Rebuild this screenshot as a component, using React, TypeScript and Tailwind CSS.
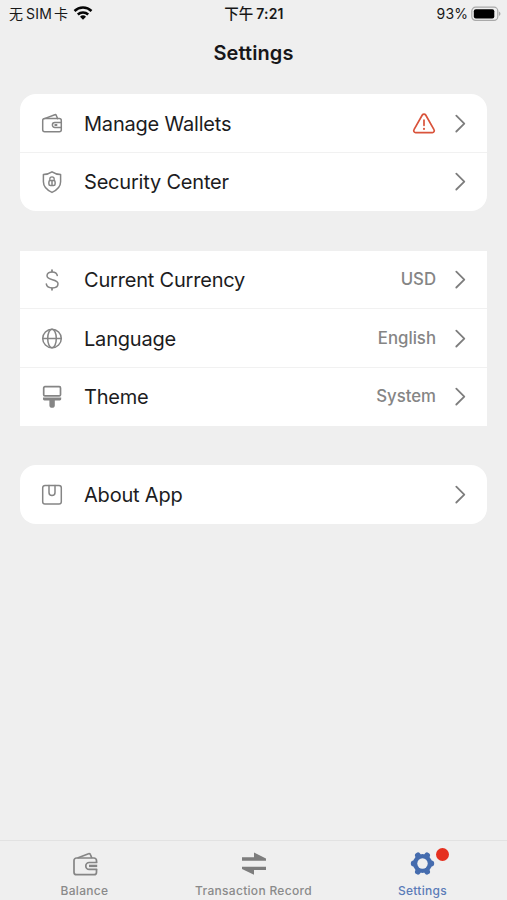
import type { ReactNode } from 'react';

type Row = {
  label: string;
  icon: ReactNode;
  value?: string;
  warning?: boolean;
  height: string;
};

const iconProps = {
  width: 24,
  height: 24,
  viewBox: '0 0 24 24',
  fill: 'none',
  stroke: '#858585',
  strokeWidth: 1.5,
  strokeLinecap: 'round' as const,
  strokeLinejoin: 'round' as const,
};

const WalletIcon = () => (
  <svg {...iconProps}>
    <rect x="2.7" y="6.6" width="18.6" height="13.2" rx="2" />
    <path d="M4.5 6.6 14.8 2.7a1.2 1.2 0 0 1 1.5.7L17.6 6.6" />
    <path d="M21.3 10.6h-6.5a2.4 2.4 0 0 0 0 4.8h6.5" />
    <path d="M15.2 13h1.4" strokeWidth="1.8" />
  </svg>
);

const ShieldIcon = () => (
  <svg {...iconProps}>
    <path d="M12 1.8c2.5 1.7 5.4 2.6 8.6 2.8v7.2c0 5-3.6 8.3-8.6 10.6-5-2.3-8.6-5.6-8.6-10.6V4.6C6.6 4.4 9.5 3.5 12 1.8Z" />
    <path d="M9.8 10.3V9a2.2 2.2 0 0 1 4.4 0v1.3" strokeWidth="1.3" />
    <rect x="8.9" y="10.5" width="6.2" height="5" rx="1.5" />
    <path d="M12 11v3.5" />
  </svg>
);

const DollarIcon = () => (
  <svg {...iconProps}>
    <path d="M17.3 7.5c-.4-2.3-2.5-3.6-5.2-3.6-2.9 0-5.1 1.5-5.1 3.8 0 5.4 11 2.5 11 8.1 0 2.5-2.3 4.1-5.6 4.1-3.4 0-5.8-1.5-6.1-4" />
    <path d="M12 2.1v1.5M12 20.3v1.5" strokeWidth="1.8" />
  </svg>
);

const GlobeIcon = () => (
  <svg {...iconProps}>
    <circle cx="12" cy="11.5" r="9.3" />
    <ellipse cx="12" cy="11.5" rx="4.3" ry="9.3" />
    <path d="M2.7 11.5h18.6" />
  </svg>
);

const BrushIcon = () => (
  <svg {...iconProps}>
    <rect x="3.7" y="1.7" width="16.8" height="9.2" rx="1.2" strokeWidth="1.7" />
    <path
      d="M3 12.6h18.2v1.5c0 .8-.6 1.4-1.4 1.4h-5v4.9c0 1.4-1.1 2.3-2.7 2.3s-2.7-.9-2.7-2.3v-4.9h-5c-.8 0-1.4-.6-1.4-1.4Z"
      fill="#858585"
      stroke="none"
    />
  </svg>
);

const AboutIcon = () => (
  <svg {...iconProps}>
    <rect x="2.7" y="2.4" width="18.6" height="18.6" rx="2.3" />
    <path d="M9 2.6v6.8a3 3 0 0 0 6 0V2.6" />
  </svg>
);

const WarningIcon = () => (
  <svg width="24" height="24" viewBox="0 0 24 24" fill="none" stroke="#d9533b" strokeWidth="1.7" strokeLinecap="round" strokeLinejoin="round">
    <path d="M10.3 3a2 2 0 0 1 3.4 0l8.3 14.7a1.9 1.9 0 0 1-1.7 2.9H3.7A1.9 1.9 0 0 1 2 17.7Z" />
    <path d="M12 8.1v5.2" />
    <path d="M12 16.7v.2" strokeWidth="2" />
  </svg>
);

const Chevron = () => (
  <svg width="12" height="20" viewBox="0 0 12 20" fill="none" stroke="#7d7d7d" strokeWidth="1.8" strokeLinecap="round" strokeLinejoin="round">
    <path d="m2.3 1.7 8 7.900-8 7.900" />
  </svg>
);

const groups: { rows: Row[]; className: string }[] = [
  {
    className: 'mt-[19px] rounded-2xl',
    rows: [
      { label: 'Manage Wallets', icon: <WalletIcon />, warning: true, height: 'h-[59px] pt-0.5' },
      { label: 'Security Center', icon: <ShieldIcon />, height: 'h-[58px]' },
    ],
  },
  {
    className: 'mt-10',
    rows: [
      { label: 'Current Currency', icon: <DollarIcon />, value: 'USD', height: 'h-[58px]' },
      { label: 'Language', icon: <GlobeIcon />, value: 'English', height: 'h-[59px] pt-0.5' },
      { label: 'Theme', icon: <BrushIcon />, value: 'System', height: 'h-[58px]' },
    ],
  },
  {
    className: 'mt-[39px] rounded-2xl',
    rows: [{ label: 'About App', icon: <AboutIcon />, height: 'h-[58.5px] pt-0.5' }],
  },
];

function StatusBar() {
  return (
    <div className="grid h-7 grid-cols-3 items-center pr-1.5 pl-[9px] text-sm text-[#171717]">
      <div className="flex items-center whitespace-nowrap">
        <span>无</span>
        <span className="ml-[3px] tracking-[0.2px]">SIM</span>
        <span className="ml-[2px]">卡</span>
        <svg className="-mt-[2px] ml-[5px]" width="20" height="14" viewBox="0 0 20 14" fill="none" stroke="#050505" strokeWidth="2.5">
          <path d="M1.5 5a12.2 12.2 0 0 1 17 0" />
          <path d="M4.8 8.5a7.6 7.6 0 0 1 10.4 0" />
          <path d="m10 13.800-3-3.100a4.400 4.400 0 0 1 6 0Z" fill="#050505" stroke="none" />
        </svg>
      </div>
      <div className="-ml-[2px] text-center font-semibold whitespace-nowrap">
        <span className="text-[14.5px] font-medium">下午</span>
        <span className="ml-[3px] tracking-[0.2px]">7:21</span>
      </div>
      <div className="flex items-center justify-end">
        <span className="tracking-[0.1px]">93%</span>
        <svg className="-mt-px ml-[3px]" width="30" height="16" viewBox="0 0 30 16">
          <rect x=".8" y="1.2" width="26" height="13.2" rx="3.8" fill="#efefef" stroke="#a9a9a9" strokeWidth="1.2" />
          <rect x="2.8" y="3.2" width="20.5" height="9.2" rx="2" fill="#000" />
          <path d="M28 5.500c2 1 2 3.600 0 4.600Z" fill="#a9a9a9" />
        </svg>
      </div>
    </div>
  );
}

function SettingsRow({ row }: { row: Row }) {
  return (
    <div className="flex h-full items-center pr-[21px] pl-5">
      {row.icon}
      <span className="ml-5 text-xl tracking-[-0.2px] whitespace-nowrap text-[#1c1c1e]">{row.label}</span>
      <div className="ml-auto flex items-center">
        {row.warning && <WarningIcon />}
        {row.value && <span className="text-[16.8px] font-medium text-[#858585]">{row.value}</span>}
        <span className="ml-[18px]">
          <Chevron />
        </span>
      </div>
    </div>
  );
}

function TabBar() {
  return (
    <nav className="grid h-[60px] grid-cols-3 border-t border-[#e2e2e2] text-xs font-medium tracking-[0.3px] text-[#8a8a8a]">
      <div className="flex flex-col items-center pt-2.5">
        <svg width="28" height="26" viewBox="0 0 28 26" fill="none" stroke="#858585" strokeWidth="1.7" strokeLinejoin="round">
          <path d="M25.500 12V9.500a2.500 2.500 0 0 0-2.500-2.500H5.500A2.500 2.500 0 0 0 3 9.500v11.700a2.500 2.500 0 0 0 2.500 2.500H23a2.500 2.500 0 0 0 2.500-2.500V18" />
          <path d="M6.500 7 17.500 2.800a1.500 1.500 0 0 1 2 .9L20.800 7" />
          <path d="M26.200 11.500h-8a3.400 3.400 0 0 0 0 6.800h8" />
          <path d="M18 14.900h8.200" strokeWidth="2.4" />
        </svg>
        <span className="mt-1.5">Balance</span>
      </div>
      <div className="flex flex-col items-center pt-2.5">
        <svg width="28" height="26" viewBox="0 0 28 26" fill="#7d7d7d">
          <path d="M2 6.200h12V1.500L26 7.500v2.200H2Z" />
          <path d="M26 15.800V19H14v4.800L2 18v-2.200Z" />
        </svg>
        <span className="mt-1.5">Transaction Record</span>
      </div>
      <div className="flex flex-col items-center pt-2.5 text-[#5b7cb8]">
        <div className="relative">
          <svg width="28" height="26" viewBox="0 0 28 26">
            <circle cx="13.5" cy="12.5" r="9.6" fill="#456cae" />
            <path d="M4.7 12.5h17.6M8.9 4.400l9.200 16.200M18.100 4.400 8.900 20.600" stroke="#456cae" strokeWidth="5.8" strokeLinecap="round" />
            <circle cx="13.5" cy="12.5" r="5.2" fill="#efefef" />
          </svg>
          <span className="absolute -top-[3px] left-[27px] size-[13px] rounded-full bg-[#e5301f]" />
        </div>
        <span className="mt-1.5">Settings</span>
      </div>
    </nav>
  );
}

export default function App() {
  return (
    <div className="flex h-screen flex-col bg-[#efefef] font-[Inter,'Noto_Sans_CJK_SC',sans-serif]">
      <StatusBar />
      <h1 className="flex h-[47px] items-center justify-center pt-0.5 text-xl font-semibold tracking-[0.1px] text-[#171719]">Settings</h1>

      <main className="flex-1 px-5">
        {groups.map((group, i) => (
          <section key={i} className={`divide-y divide-[#f1f1f1] overflow-hidden bg-white ${group.className}`}>
            {group.rows.map((row) => (
              <div key={row.label} className={row.height}>
                <SettingsRow row={row} />
              </div>
            ))}
          </section>
        ))}
      </main>

      <TabBar />
    </div>
  );
}
